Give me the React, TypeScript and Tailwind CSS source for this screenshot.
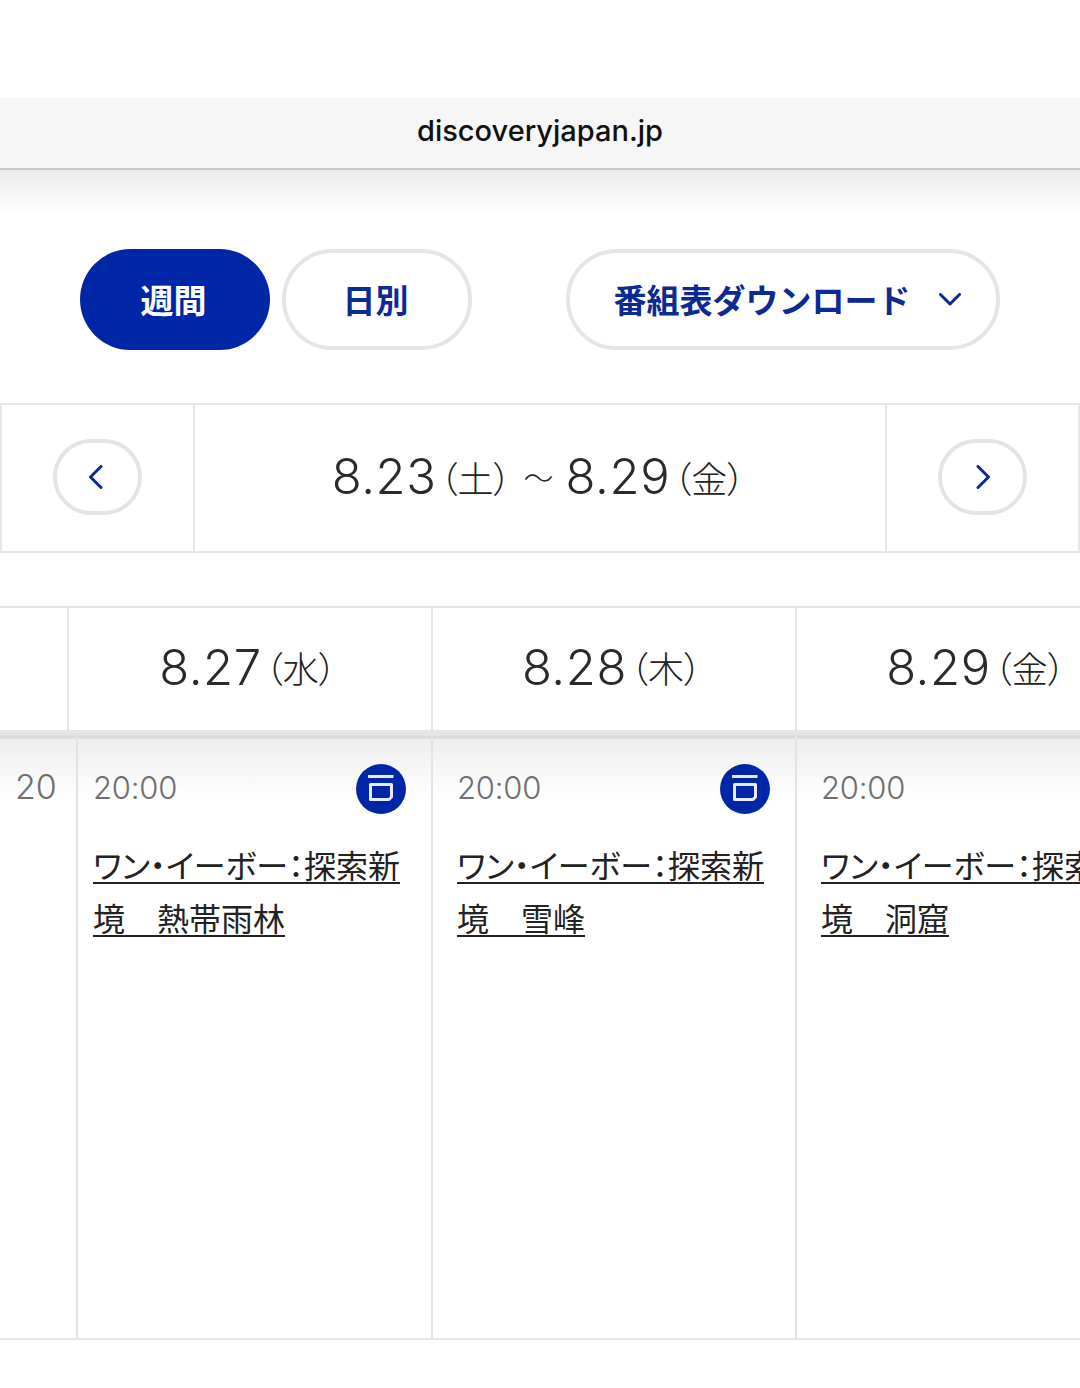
const jp = "font-['Inter','Noto_Sans_CJK_JP',sans-serif]";

function DateLabel({ num, day }: { num: string; day: string }) {
  return (
    <span className="inline-flex items-center">
      <span className="font-['Inter',sans-serif] text-[49px] font-light leading-none tracking-[0.6px] text-[#2a2a2a]">{num}</span>
      <span className="ml-[3px] font-['Noto_Sans_CJK_JP',sans-serif] text-[36px] font-light leading-none text-[#222222] [font-feature-settings:'palt']">（{day}）</span>
    </span>
  );
}

function Chevron({ dir }: { dir: "left" | "right" | "down" }) {
  const d = dir === "left" ? "M13 1.5 L2.5 12 L13 22.5" : dir === "right" ? "M2 1.5 L12.5 12 L2 22.5" : "M1.5 1.5 L11 11 L20.5 1.5";
  const size = dir === "down" ? { w: 22, h: 13 } : { w: 15, h: 24 };
  return (
    <svg width={size.w} height={size.h} viewBox={`0 0 ${size.w} ${size.h}`} fill="none" stroke="#0b2a94" strokeWidth="3" strokeLinecap="round" strokeLinejoin="round">
      <path d={d} />
    </svg>
  );
}

function ArchiveIcon() {
  return (
    <span className="flex h-[50px] w-[50px] items-center justify-center rounded-full bg-[#0026a8]">
      <svg width="50" height="50" viewBox="0 0 50 50" fill="none" stroke="#e8ecf8" strokeWidth="3">
        <path d="M12 12.5 H37.5" />
        <path d="M14.5 20.5 H35.5 V33 L33 35.5 H14.5 Z" strokeLinejoin="round" />
      </svg>
    </span>
  );
}

function Program({ title, icon, first }: { title: string; icon?: boolean; first?: boolean }) {
  return (
    <div className={`border-l-2 border-[#e3e3e3] pr-[25px] pt-[34px] ${first ? "pl-[15px]" : "pl-[24px]"}`}>
      <div className="flex h-[50px] items-center justify-between">
        <span className="mt-[-2px] font-['Inter',sans-serif] text-[31px] font-light tracking-[-0.2px] text-[#6f6f6f]">20:00</span>
        {icon && <ArchiveIcon />}
      </div>
      <p className="mt-[24px] w-[312px] font-['Noto_Sans_CJK_JP',sans-serif] text-[32px] leading-[53px] text-[#222222] underline decoration-2 underline-offset-[4px] [font-feature-settings:'palt']">
        {title}
      </p>
    </div>
  );
}

export default function App() {
  return (
    <div className={`h-[1388px] w-[1080px] overflow-hidden bg-white ${jp}`}>
      <div className="h-[98px]" />
      <div className="flex h-[72px] items-center justify-center border-b-2 border-[#c9c9c9] bg-[#f6f6f6] pb-[5px] font-['Inter',sans-serif] text-[29px] font-medium text-[#111111]">
        discoveryjapan.jp
      </div>
      <div className="h-[45px] bg-gradient-to-b from-[#ebebeb] to-white" />

      <div className="mt-[34px] flex h-[101px] pl-[80px] pr-[80px] font-['Noto_Sans_CJK_JP',sans-serif] text-[33px] font-bold">
        <div className="flex w-[190px] items-center justify-center rounded-full bg-[#0026a8] pr-[3px] text-white">週間</div>
        <div className="ml-[12px] flex w-[190px] items-center justify-center rounded-full border-4 border-[#e5e5e5] pr-[3px] text-[#0b2a94]">日別</div>
        <div className="ml-auto flex w-[434px] items-center justify-center gap-[28px] rounded-full border-4 border-[#e5e5e5] pl-[8px] text-[#0b2a94]">
          <span>番組表ダウンロード</span>
          <Chevron dir="down" />
        </div>
      </div>

      <div className="mt-[53px] grid h-[150px] grid-cols-[195px_690px_195px] border-y-2 border-[#e6e6e6]">
        <div className="flex items-center justify-center border-x-2 border-[#e6e6e6] pb-[2px]">
          <div className="flex h-[76px] w-[89px] items-center justify-center rounded-[38px] border-4 border-[#e4e4e4] pr-[4px]">
            <Chevron dir="left" />
          </div>
        </div>
        <div className="flex items-center justify-center gap-[12px] pb-[3px] pr-[3px]">
          <DateLabel num="8.23" day="土" />
          <span className="font-['Noto_Sans_CJK_JP',sans-serif] text-[30px] font-light text-[#2a2a2a]">〜</span>
          <DateLabel num="8.29" day="金" />
        </div>
        <div className="flex items-center justify-center border-x-2 border-[#e6e6e6] pb-[2px] pl-[0px]">
          <div className="flex h-[76px] w-[89px] items-center justify-center rounded-[38px] border-4 border-[#e4e4e4] pl-[2px]">
            <Chevron dir="right" />
          </div>
        </div>
      </div>

      <div className="mt-[53px] grid h-[124px] grid-cols-[67px_364px_364px_364px] border-t-2 border-[#e6e6e6]">
        <div />
        {[
          ["8.27", "水"],
          ["8.28", "木"],
          ["8.29", "金"],
        ].map(([num, day]) => (
          <div key={num} className="flex items-center justify-center border-l-2 border-[#e6e6e6] pb-[4px] pr-[4px]">
            <DateLabel num={num} day={day} />
          </div>
        ))}
      </div>

      <div className="grid h-[610px] grid-cols-[76px_355px_364px_364px] border-b-2 border-[#e6e6e6] bg-[linear-gradient(#e5e5e5_0,#e5e5e5_5px,#d9d9d9_6px,#d9d9d9_8px,#eeeeee_9px,#ffffff_70px)]">
        <div className="overflow-hidden">
          <div className="pl-[15px] pt-[31px] font-['Inter',sans-serif] text-[34px] font-light text-[#6f6f6f]">20</div>
          <div className="ml-[-26px] mt-[33px] w-[30px] font-['Noto_Sans_CJK_JP',sans-serif] text-[30px] text-[#555555]">目</div>
        </div>
        <Program first icon title="ワン・イーボー：探索新境　熱帯雨林" />
        <Program icon title="ワン・イーボー：探索新境　雪峰" />
        <Program title="ワン・イーボー：探索新境　洞窟" />
      </div>
    </div>
  );
}
